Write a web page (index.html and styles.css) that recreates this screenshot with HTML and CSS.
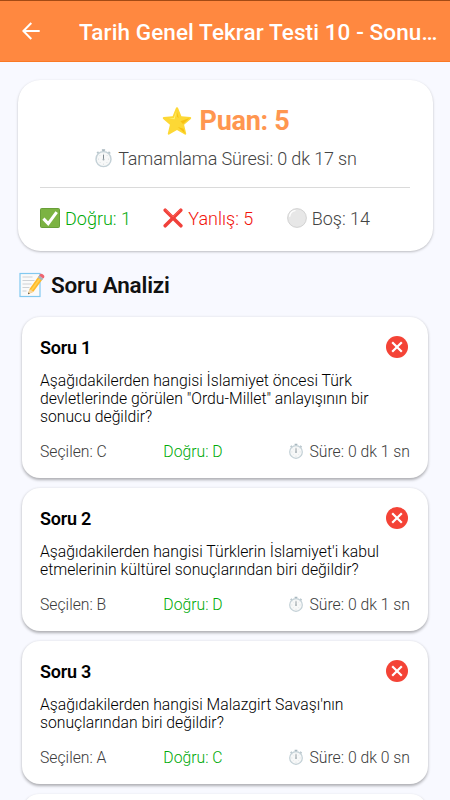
FILE: index.html
```html
<!DOCTYPE html>
<html lang="tr">
<head>
<meta charset="utf-8">
<title>Tarih Genel Tekrar Testi 10</title>
<link rel="stylesheet" href="styles.css">
</head>
<body>
<svg class="defs" width="0" height="0" aria-hidden="true">
  <symbol id="watch" viewBox="0 0 20 20">
    <path d="M8.3.8h3.4v1.6H8.3zM9.1 2h1.8v2H9.1z" fill="#a9b8bf"/>
    <path d="M15.2 3.5l1.9 1.8M4.8 3.5L3.2 5" stroke="#b5c3c9" stroke-width="1.7"/>
    <circle cx="10" cy="11.2" r="7.9" fill="#f7f8f8" stroke="#c3d0d6" stroke-width="1.5"/>
    <path d="M10 5.5v1M10 16v1M4.3 11.2h1M14.7 11.2h1M6 7.2l.7.7M14 7.2l-.7.7M6 15.2l.7-.7M14 15.2l-.7-.7" stroke="#c3c9cc" stroke-width=".7"/>
    <path d="M10 6.6v5" stroke="#78838a" stroke-width="1"/>
    <circle cx="10" cy="11.5" r="1" fill="#9da8ae"/>
  </symbol>
  <symbol id="wrong" viewBox="0 0 22 22">
    <circle cx="11" cy="11" r="11" fill="#f44336"/>
    <path d="M6.2 6.2l9.6 9.6M15.8 6.2l-9.6 9.6" stroke="#fff" stroke-width="2.2"/>
  </symbol>
</svg>
<header class="bar">
  <svg class="back" viewBox="0 0 18 18"><path d="M17.7 9H1.6M9.3 1L1.4 9l7.9 8" fill="none" stroke="#fff" stroke-width="2"/></svg>
  <h1>Tarih Genel Tekrar Testi 10 - Sonu…</h1>
</header>
<main>
  <section class="summary">
    <div class="score">
      <svg class="star" viewBox="0 0 30 30"><path d="M15 1.2c.6 0 .9.5 1.2 1.1l3.2 7.9 8.8.8c1.1.1 1.4 1.2.6 1.9l-6.7 5.8 2.1 8.8c.2 1-.6 1.5-1.4 1L15 24l-7.8 4.5c-.8.5-1.6-.1-1.4-1l2.1-8.8-6.7-5.8c-.8-.7-.5-1.8.6-1.9l8.8-.8 3.2-7.9c.3-.6.6-1.1 1.2-1.1z" fill="#fdd835"/><path d="M15.4 6.2l1.2 5.8-1.5-1.2zM27.6 12l-9.2 3.2 2.6 2.7zM22.9 27.5l-7-6.4 5.7 1.6z" fill="#f4b400" opacity=".65"/><path d="M14.5 5l-2.7 7-5 .8 5.8.5z" fill="#fff176"/></svg>
      <span>Puan: 5</span>
    </div>
    <div class="total"><svg class="watch"><use href="#watch"/></svg><span>Tamamlama Süresi: 0 dk 17 sn</span></div>
    <hr>
    <div class="stats">
      <div class="right"><svg viewBox="0 0 20 20"><rect x=".5" y=".5" width="19" height="19" rx="1" fill="#7cb342" stroke="#689f38"/><path d="M3.4 10.6l4.8 5L16.7 4.2" fill="none" stroke="#fff" stroke-width="3"/></svg><span>Doğru: 1</span></div>
      <div class="bad"><svg viewBox="0 0 20 20"><path d="M2.2 2.2l15.7 15.6M17.8 2.2L2.2 17.8" stroke="#f0403a" stroke-width="3.5" stroke-linecap="round"/><path d="M2.4 1.7l7.7 7.1L17.4 1.6" fill="none" stroke="#ff6255" stroke-width=".9"/></svg><span>Yanlış: 5</span></div>
      <div class="blank"><svg viewBox="0 0 20 20"><circle cx="10" cy="10" r="9.4" fill="#e7e7e7" stroke="#c9c9c9" stroke-width=".8"/><path d="M2.7 8.2C3.2 5.2 5 3.1 8 2.6" fill="none" stroke="#fff" stroke-width="1.4" stroke-linecap="round"/></svg><span>Boş: 14</span></div>
    </div>
  </section>
  <h2><svg viewBox="0 0 26 26"><rect x="1" y="1.5" width="20" height="23" fill="#fafafa" stroke="#82c9f0" stroke-width="1.2"/><path d="M3.5 5h10M3.5 8.5h12M3.5 12h9M3.5 15.5h7M3.5 19h4" stroke="#c9cdd0" stroke-width=".9"/><path d="M9 22.3l1.5-5.4L19.8 4l4 3-9.4 12.8z" fill="#ffb829"/><path d="M11.5 18.3L21 5l1.4 1L13 19z" fill="#ffd150"/><path d="M9 22.3l1.5-5.4 3.9 2.9z" fill="#f4d6a8"/><path d="M9 22.3l.5-1.9 1.3 1z" fill="#444"/><path d="M18.8 5.4l1.3-1.8 4.1 3-1.4 1.8z" fill="#a6b9c2"/><path d="M20.1 3.6l1-1.4c1.3-1.6 5.2 1.2 4.1 3l-1 1.4z" fill="#ef6570"/></svg><span>Soru Analizi</span></h2>
  <div class="list">
    <article>
      <div class="head"><h3>Soru 1</h3><svg><use href="#wrong"/></svg></div>
      <p>Aşağıdakilerden hangisi İslamiyet öncesi Türk<br>devletlerinde görülen "Ordu-Millet" anlayışının bir<br>sonucu değildir?</p>
      <div class="details"><span class="picked">Seçilen: C</span><span class="right">Doğru: D</span><div class="time"><svg class="watch"><use href="#watch"/></svg><span>Süre: 0 dk 1 sn</span></div></div>
    </article>
    <article>
      <div class="head"><h3>Soru 2</h3><svg><use href="#wrong"/></svg></div>
      <p>Aşağıdakilerden hangisi Türklerin İslamiyet'i kabul<br>etmelerinin kültürel sonuçlarından biri değildir?</p>
      <div class="details"><span class="picked">Seçilen: B</span><span class="right">Doğru: D</span><div class="time"><svg class="watch"><use href="#watch"/></svg><span>Süre: 0 dk 1 sn</span></div></div>
    </article>
    <article>
      <div class="head"><h3>Soru 3</h3><svg><use href="#wrong"/></svg></div>
      <p>Aşağıdakilerden hangisi Malazgirt Savaşı'nın<br>sonuçlarından biri değildir?</p>
      <div class="details"><span class="picked">Seçilen: A</span><span class="right">Doğru: C</span><div class="time"><svg class="watch"><use href="#watch"/></svg><span>Süre: 0 dk 0 sn</span></div></div>
    </article>
    <article class="next"></article>
  </div>
</main>
</body>
</html>
```
FILE: styles.css
```css
* { box-sizing: border-box; margin: 0; }
body {
  height: 800px;
  overflow: hidden;
  background: #f8f9ff;
  font-family: Roboto, sans-serif;
  font-weight: 350;
  color: #111;
  white-space: nowrap;
}
svg { display: block; flex: none; }
.defs { position: absolute; }
.bar {
  height: 62px;
  background: #ff8840;
  border-top: 1px solid #a34a14;
  border-bottom: 1px solid #fa7925;
  display: flex;
  align-items: center;
  padding: 0 0 0 22px;
}
.back { width: 18px; height: 18px; }
h1 { margin-left: 39px; padding-top: 1px; font-size: 22.5px; font-weight: 500; letter-spacing: .1px; color: #fff; }
.summary {
  margin: 18px 17.5px 0;
  height: 171px;
  padding: 24px 22.5px 0;
  border-radius: 22.5px;
  background: #fff;
  box-shadow: 0 1px 2.5px rgba(0, 0, 0, .25);
}
.score, .total { display: flex; justify-content: center; align-items: center; }
.score { height: 34px; padding-left: 1px; font-size: 27px; font-weight: 700; letter-spacing: -.3px; color: #ff9650; gap: 8px; }
.star { width: 30px; height: 30px; }
.total { height: 22px; margin-top: 9px; padding-left: 1px; font-size: 18px; letter-spacing: -.15px; gap: 5px; color: #444; }
.total .watch { width: 19px; height: 20px; }
hr { border: 0; height: 1px; background: #dadada; margin-top: 18px; }
.stats { display: grid; grid-template-columns: repeat(3, 1fr); height: 22px; margin-top: 19px; font-size: 18px; }
.stats div { display: flex; align-items: center; gap: 5px; }
.stats svg { width: 20px; height: 20px; }
.right { color: #00aa08; }
.bad { color: #f1140c; }
.blank { color: #444; }
h2 { display: flex; align-items: center; height: 28px; margin: 20px 18.5px 0; gap: 6.5px; font-size: 22.5px; font-weight: 600; letter-spacing: -.2px; }
h2 svg { width: 26px; height: 26px; }
.list { display: grid; gap: 10px; margin: 17.5px 22px 0; height: 482px; align-content: start; }
article {
  background: #fff;
  border-radius: 18px;
  padding: 17.5px 18px 18px;
  box-shadow: 0 1.5px 3px rgba(0, 0, 0, .3);
}
.head { display: flex; justify-content: space-between; align-items: center; height: 26px; }
.head svg { width: 22px; height: 22px; margin-right: 2px; }
h3 { font-size: 18px; font-weight: 600; letter-spacing: -.25px; color: #000; }
p { margin-top: 12px; font-size: 15.75px; line-height: 18px; color: #000; }
.details { display: grid; grid-template-columns: repeat(3, 1fr); align-items: center; height: 18px; margin-top: 15.5px; font-size: 15.75px; }
.picked, .time { color: #3c3c3c; }
.time { display: flex; align-items: center; justify-content: flex-end; gap: 5px; }
.time .watch { width: 16px; height: 18px; }
.next { height: 20px; }
```
